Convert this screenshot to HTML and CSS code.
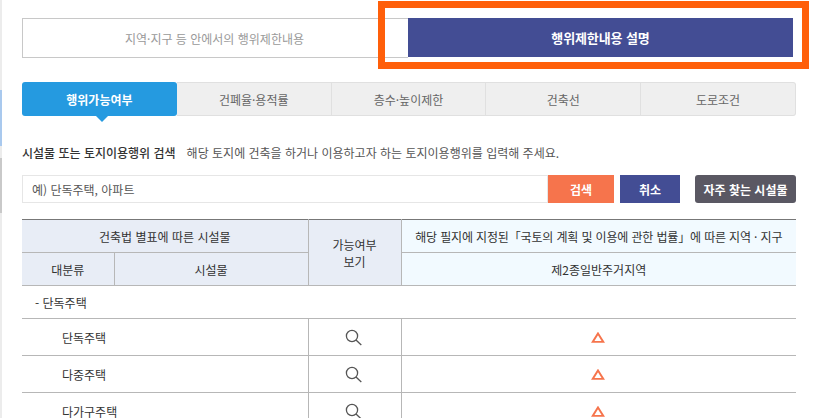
FILE: index.html
```html
<!DOCTYPE html>
<html lang="ko">
<head>
<meta charset="utf-8">
<title>행위제한내용 설명</title>
<link rel="stylesheet" href="styles.css">
</head>
<body>
<div class="edge"><span class="edge-blue"></span><span class="edge-gray"></span></div>
<main class="page">
  <div class="top-tabs">
    <div class="top-tab">지역·지구 등 안에서의 행위제한내용</div>
    <div class="top-tab top-tab-on">행위제한내용 설명</div>
  </div>
  <nav class="tabs">
    <div class="tab tab-on">행위가능여부</div>
    <div class="tab">건폐율·용적률</div>
    <div class="tab">층수·높이제한</div>
    <div class="tab">건축선</div>
    <div class="tab">도로조건</div>
  </nav>
  <p class="intro"><span class="intro-title">시설물 또는 토지이용행위 검색</span><span class="intro-text">해당 토지에 건축을 하거나 이용하고자 하는 토지이용행위를 입력해 주세요.</span></p>
  <div class="search">
    <input class="search-input" type="text" placeholder="예) 단독주택, 아파트">
    <button class="btn btn-orange">검색</button>
    <button class="btn btn-navy">취소</button>
    <button class="btn btn-dark">자주 찾는 시설물</button>
  </div>
  <table class="grid">
    <colgroup><col class="c1"><col class="c2"><col class="c3"><col class="c4"></colgroup>
    <thead>
      <tr>
        <th colspan="2" class="th-a">건축법 별표에 따른 시설물</th>
        <th rowspan="2" class="th-a">가능여부<br>보기</th>
        <th class="th-b th-long">해당 필지에 지정된「국토의 계획 및 이용에 관한 법률」에 따른 지역 · 지구</th>
      </tr>
      <tr>
        <th class="th-a">대분류</th>
        <th class="th-a">시설물</th>
        <th class="th-b">제2종일반주거지역</th>
      </tr>
    </thead>
    <tbody>
      <tr class="group"><td colspan="4">- 단독주택</td></tr>
      <tr>
        <td colspan="2" class="name">단독주택</td>
        <td class="mid"><svg class="ico-search" viewBox="0 0 17 17"><circle cx="7" cy="7" r="5.6"/><path d="M11 11l5.3 5"/></svg></td>
        <td class="mid"><svg class="ico-tri" viewBox="0 0 14 11"><path d="M7 1.4L12.3 9.9H1.7Z"/></svg></td>
      </tr>
      <tr>
        <td colspan="2" class="name">다중주택</td>
        <td class="mid"><svg class="ico-search" viewBox="0 0 17 17"><circle cx="7" cy="7" r="5.6"/><path d="M11 11l5.3 5"/></svg></td>
        <td class="mid"><svg class="ico-tri" viewBox="0 0 14 11"><path d="M7 1.4L12.3 9.9H1.7Z"/></svg></td>
      </tr>
      <tr class="row-tall">
        <td colspan="2" class="name">다가구주택</td>
        <td class="mid"><svg class="ico-search" viewBox="0 0 17 17"><circle cx="7" cy="7" r="5.6"/><path d="M11 11l5.3 5"/></svg></td>
        <td class="mid"><svg class="ico-tri" viewBox="0 0 14 11"><path d="M7 1.4L12.3 9.9H1.7Z"/></svg></td>
      </tr>
    </tbody>
  </table>
</main>
<div class="highlight"></div>
</body>
</html>
```

FILE: styles.css
```css
* { box-sizing: border-box; }
html, body { height: 418px; overflow: hidden; }
body {
  margin: 0;
  display: flex;
  background: #fff;
  color: #333;
  font-family: "Noto Sans CJK KR", "Noto Sans", sans-serif;
  font-size: 12px;
}
.edge {
  flex: 0 0 2px;
  height: 418px;
  background: #ececec;
  display: flex;
  flex-direction: column;
}
.edge-blue { height: 56px; margin-top: 90px; background: #a9c9ee; }
.edge-gray { height: 55px; margin-top: 12px; background: #c9c9c9; }
.page { flex: 0 0 774px; margin-left: 20px; padding-top: 18px; }

.top-tabs { display: flex; height: 40px; }
.top-tab {
  flex: 0 0 386px;
  display: flex;
  align-items: center;
  justify-content: center;
  padding-right: 2px;
  border: 1px solid #c8c8c8;
  border-right: 0;
  font-size: 12px;
  color: #999;
}
.top-tab-on {
  flex: 0 0 385px;
  height: 39px;
  padding-right: 0;
  border: 0;
  background: #434d94;
  color: #fff;
  font-size: 13px;
  font-weight: 700;
  letter-spacing: -0.1px;
}

.tabs { display: grid; grid-template-columns: repeat(5, 1fr); height: 34px; margin-top: 24px; }
.tab {
  display: flex;
  align-items: center;
  justify-content: center;
  background: #efefef;
  border: 1px solid #e0e0e0;
  border-left: 0;
  color: #666;
}
.tab:last-child { border-radius: 0 3px 3px 0; }
.tab-on {
  position: relative;
  background: #259ae0;
  border: 0;
  border-radius: 3px;
  color: #fff;
  font-weight: 700;
}
.tab-on::after {
  content: "";
  position: absolute;
  left: 74px;
  top: 34px;
  border: 6px solid transparent;
  border-top-color: #259ae0;
  border-bottom: 0;
}

.intro { margin: 28px 0 0; height: 17px; line-height: 17px; color: #555; white-space: nowrap; }
.intro-title { color: #333; font-weight: 500; margin-right: 11px; }

.search { display: flex; height: 28px; margin-top: 14px; }
.search-input {
  flex: 0 0 526px;
  border: 1px solid #e6e6e6;
  padding: 0 9px;
  font: inherit;
  outline: 0;
}
.search-input::placeholder { color: #555; opacity: 1; }
.btn {
  border: 0;
  padding: 0;
  color: #fff;
  font: inherit;
  font-weight: 700;
}
.btn-orange { flex: 0 0 66px; background: #f6744c; }
.btn-navy { flex: 0 0 60px; margin-left: 6px; background: #434d94; }
.btn-dark { flex: 0 0 101px; margin-left: 15px; background: #5a5863; border-radius: 3px; white-space: nowrap; }

.grid {
  width: 774px;
  margin-top: 16px;
  border-collapse: collapse;
  table-layout: fixed;
  border-top: 1px solid #777;
}
.c1 { width: 92px; }
.c2 { width: 194px; }
.c3 { width: 93px; }
.c4 { width: 395px; }
.grid th, .grid td {
  border: 1px solid #b7b7b7;
  padding: 0;
  font-weight: 400;
  text-align: center;
  color: #333;
}
.grid tr > :first-child { border-left: 0; }
.grid tr > :last-child { border-right: 0; }
.grid thead tr:first-child th { border-top: 0; }
.grid thead tr { height: 33px; }
.th-a { background: #e8edf6; }
.th-b { background: #f2faff; white-space: nowrap; }
.th-long { letter-spacing: -0.15px; }
.grid tbody tr { height: 37px; }
.grid tbody tr.group { height: 33px; }
.grid tbody tr.row-tall { height: 38px; }
.grid .group td { text-align: left; padding-left: 13px; border-right: 0; }
.grid .name { text-align: left; padding-left: 40px; }
.mid svg { display: block; margin: 0 auto; }
.ico-search { width: 17px; height: 17px; fill: none; stroke: #555; stroke-width: 1.3; transform: translateX(-1px); }
.ico-tri { width: 14px; height: 11px; fill: none; stroke: #f6744c; stroke-width: 1.9; transform: translateX(-1px); }

.highlight {
  position: absolute;
  left: 378px;
  top: 1px;
  width: 431px;
  height: 68px;
  border: 7px solid #ff5f0a;
  pointer-events: none;
}
```
